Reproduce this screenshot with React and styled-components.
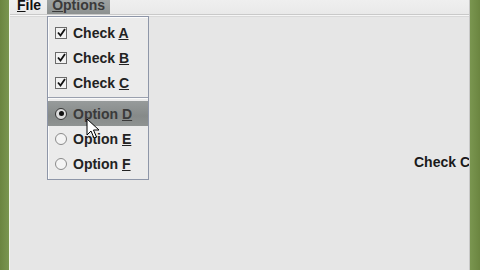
import React from 'react';
import styled, { createGlobalStyle } from 'styled-components';

const Global = createGlobalStyle`
  html, body {
    margin: 0;
    padding: 0;
    width: 480px;
    height: 270px;
    overflow: hidden;
    background: #6f8a45;
    font-family: "Liberation Sans", Arial, sans-serif;
  }
`;

const Desktop = styled.div`
  width: 480px;
  height: 270px;
  display: flex;
  background: linear-gradient(90deg, #6b8540 0, #7a9650 9px, #7a9650 470px, #6b8540 480px);
`;

const Frame = styled.div`
  margin-left: 9px;
  width: 461px;
  height: 270px;
  display: flex;
  flex-direction: column;
  background: #e6e6e6;
  border-left: 1px solid #f4f7ee;
  border-right: 1px solid #c8c8c8;
  box-sizing: border-box;
  position: relative;
  overflow: hidden;
`;

const MenuBar = styled.div`
  height: 14px;
  display: flex;
  align-items: flex-end;
  padding-left: 4px;
  background: linear-gradient(#efefef, #e9e9e9);
  border-bottom: 1px solid #c9c9c9;
  box-shadow: 0 1px 0 #f6f6f6, 0 2px 0 #d8d8d8;
`;

const MenuTitle = styled.div`
  height: 14px;
  padding: 0 ${p => (p.$open ? 5 : 3)}px;
  margin-left: ${p => (p.$open ? 3 : 0)}px;
  font-size: 14px;
  font-weight: bold;
  line-height: 10px;
  color: ${p => (p.$open ? '#3a3a3a' : '#111')};
  background: ${p => (p.$open ? 'linear-gradient(#9ea3a3, #8d9190)' : 'transparent')};
  overflow: hidden;
  box-sizing: border-box;
`;

const Under = styled.span`
  text-decoration: underline;
`;

const Content = styled.div`
  flex: 1;
  display: flex;
  justify-content: flex-end;
  align-items: flex-start;
  padding-top: 139px;
`;

const Label = styled.div`
  font-size: 14px;
  font-weight: bold;
  color: #1a1a1a;
  white-space: nowrap;
  margin-right: -1px;
`;

const Popup = styled.div`
  position: absolute;
  left: 37px;
  top: 16px;
  width: 102px;
  padding: 3px 0;
  background: #ebebeb;
  border: 1px solid #8e96a8;
  box-shadow: inset 1px 1px 0 #fbfbfb;
  box-sizing: border-box;
  display: flex;
  flex-direction: column;
`;

const Item = styled.div`
  height: 25px;
  display: flex;
  align-items: center;
  gap: 6px;
  padding-left: 7px;
  font-size: 14px;
  font-weight: bold;
  color: ${p => (p.$active ? '#3a3a3a' : '#222')};
  background: ${p => (p.$active ? 'linear-gradient(#979b9b, #868a89 60%, #8f9392)' : 'transparent')};
  white-space: nowrap;
`;

const Separator = styled.div`
  height: 6px;
  display: flex;
  flex-direction: column;
  justify-content: center;
  &::before {
    content: '';
    height: 1px;
    background: #9aa0ae;
  }
  &::after {
    content: '';
    height: 1px;
    background: #fafafa;
  }
`;

const Box = styled.div`
  width: 10px;
  height: 10px;
  border: 1px solid #6b6b6b;
  background: #f2f2f2;
  display: flex;
  align-items: center;
  justify-content: center;
`;

const Radio = styled.div`
  width: 10px;
  height: 10px;
  border-radius: 50%;
  border: 1px solid ${p => (p.$on ? '#333' : '#8a8a8a')};
  background: ${p => (p.$on ? '#dcdcdc' : '#f4f4f4')};
  display: flex;
  align-items: center;
  justify-content: center;
  &::after {
    content: '';
    display: ${p => (p.$on ? 'block' : 'none')};
    width: 5px;
    height: 5px;
    border-radius: 50%;
    background: #111;
  }
`;

const Cursor = styled.svg`
  position: absolute;
  left: 76px;
  top: 118px;
`;

const Check = () => (
  <Box>
    <svg width="9" height="9" viewBox="0 0 9 9">
      <path d="M1 4.5 L3.5 7.5 L8 1" fill="none" stroke="#111" strokeWidth="1.8" />
    </svg>
  </Box>
);

const checks = ['A', 'B', 'C'];
const options = ['D', 'E', 'F'];

export default function App() {
  return (
    <>
      <Global />
      <Desktop>
        <Frame>
          <MenuBar>
            <MenuTitle><Under>F</Under>ile</MenuTitle>
            <MenuTitle $open><Under>O</Under>ptions</MenuTitle>
          </MenuBar>
          <Content>
            <Label>Check C</Label>
          </Content>
          <Popup>
            {checks.map(c => (
              <Item key={c}>
                <Check />
                <span>Check <Under>{c}</Under></span>
              </Item>
            ))}
            <Separator />
            {options.map((o, i) => (
              <Item key={o} $active={i === 0}>
                <Radio $on={i === 0} />
                <span>Option <Under>{o}</Under></span>
              </Item>
            ))}
          </Popup>
          <Cursor width="14" height="22" viewBox="0 0 14 22">
            <path d="M1 1 L1 17 L5 13 L8 20 L10.5 19 L7.5 12 L13 12 Z" fill="#fff" stroke="#000" strokeWidth="1" strokeLinejoin="round" />
          </Cursor>
        </Frame>
      </Desktop>
    </>
  );
}
